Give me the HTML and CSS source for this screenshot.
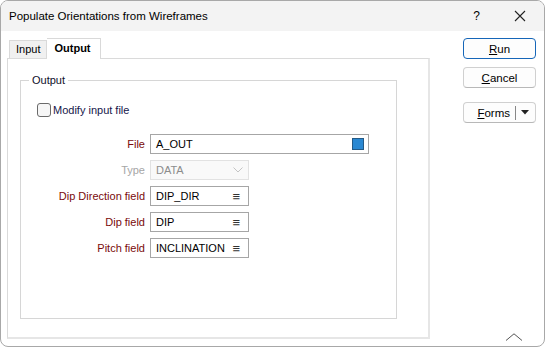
FILE: index.html
```html
<!DOCTYPE html>
<html lang="en">
<head>
<meta charset="UTF-8">
<title>Populate Orientations from Wireframes</title>
<link rel="stylesheet" href="styles.css">
</head>
<body>
  <div class="window">
    <div class="titlebar">
      <span class="title">Populate Orientations from Wireframes</span>
      <span class="help">?</span>
      <svg class="close" width="12" height="12" viewBox="0 0 12 12">
        <path d="M1 1 L11 11 M11 1 L1 11" stroke="#222" stroke-width="1.1" fill="none"/>
      </svg>
    </div>

    <div class="main">
      <div class="left">
        <div class="tabs">
          <div class="tab">Input</div>
          <div class="tab active">Output</div>
        </div>
        <div class="panel">
          <fieldset class="group">
            <legend>Output</legend>

            <label class="check">
              <span class="box"></span>
              <span>Modify input file</span>
            </label>

            <div class="form">
              <span class="label">File</span>
              <div class="field wide">
                <span>A_OUT</span>
                <span class="swatch"></span>
              </div>

              <span class="label disabled">Type</span>
              <div class="field combo disabled">
                <span>DATA</span>
                <svg width="10" height="6" viewBox="0 0 10 6"><path d="M0.5 0.5 L5 5 L9.5 0.5" stroke="#c4c4c4" fill="none"/></svg>
              </div>

              <span class="label">Dip Direction field</span>
              <div class="field">
                <span>DIP_DIR</span>
                <span class="list">&#8801;</span>
              </div>

              <span class="label">Dip field</span>
              <div class="field">
                <span>DIP</span>
                <span class="list">&#8801;</span>
              </div>

              <span class="label">Pitch field</span>
              <div class="field">
                <span>INCLINATION</span>
                <span class="list">&#8801;</span>
              </div>
            </div>
          </fieldset>
        </div>
      </div>

      <div class="side">
        <button class="btn default"><u>R</u>un</button>
        <button class="btn"><u>C</u>ancel</button>
        <button class="btn forms">
          <span class="forms-text"><u>F</u>orms</span>
          <span class="sep"></span>
          <svg width="8" height="5" viewBox="0 0 8 5"><path d="M0 0 L8 0 L4 4.5 Z" fill="#222"/></svg>
        </button>
      </div>
    </div>

    <svg class="grip" width="18" height="8" viewBox="0 0 18 8">
      <path d="M1 7.5 L9 0.8 L17 7.5" stroke="#555" stroke-width="1" fill="none"/>
    </svg>
  </div>
</body>
</html>
```

FILE: styles.css
```css
* {
  box-sizing: border-box;
}

body {
  margin: 0;
  font-family: "Liberation Sans", Arial, sans-serif;
  font-size: 11px;
  color: #000;
  background: #fff;
}

.window {
  position: relative;
  width: 545px;
  height: 347px;
  border: 1px solid #a8a8a8;
  border-radius: 8px;
  overflow: hidden;
  background: #fff;
}

.titlebar {
  display: flex;
  align-items: center;
  height: 30px;
  background: #f3f3f3;
  padding-left: 8px;
}
.title {
  flex: 1;
  font-size: 11.5px;
}
.help {
  font-size: 12px;
  margin-right: 34px;
}
.close {
  margin-right: 18px;
}

.main {
  display: flex;
}

.left {
  width: 429px;
  padding: 7px 0 0 6px;
}

.tabs {
  display: flex;
  align-items: flex-end;
  height: 20px;
  padding-left: 2px;
}
.tab {
  height: 18px;
  line-height: 17px;
  padding: 0 6px;
  border: 1px solid #d9d9d9;
  border-bottom: none;
  background: #f0f0f0;
}
.tab.active {
  height: 21px;
  line-height: 19px;
  margin-bottom: -1px;
  padding: 0 9px 0 7px;
  font-weight: bold;
  background: #fff;
  position: relative;
  z-index: 1;
  border-left: none;
}

.panel {
  height: 281px;
  border: 1px solid #dadada;
  border-right: 2px solid #e6e6e6;
  border-bottom: 2px solid #e6e6e6;
  padding: 15px 0 0 12px;
}

.group {
  margin: 0;
  width: 377px;
  height: 245px;
  border: 1px solid #d6d6d6;
  padding: 0;
}
.group legend {
  margin-left: 8px;
  padding: 0 3px;
  line-height: 12px;
  color: #0f0f2a;
}

.check {
  display: flex;
  align-items: center;
  gap: 2px;
  height: 14px;
  margin: 17px 0 0 16px;
  color: #16164a;
}
.box {
  width: 14px;
  height: 14px;
  border: 1px solid #6a6a6a;
  border-radius: 3px;
  background: #f6f6f6;
}

.form {
  display: grid;
  grid-template-columns: 124px auto;
  column-gap: 5px;
  row-gap: 6px;
  margin-top: 17px;
  align-items: center;
}
.label {
  text-align: right;
  color: #7a0a0a;
}
.label.disabled {
  color: #a6a6a6;
}

.field {
  display: flex;
  align-items: center;
  justify-content: space-between;
  width: 99px;
  height: 20px;
  padding: 0 8px 0 5px;
  border: 1px solid #a6a6a6;
  background: #fff;
}
.field.wide {
  width: 219px;
  padding-right: 4px;
}
.field.combo {
  border-color: #e2e2e2;
  background: #f9f9f9;
  color: #8c8c8c;
  padding-right: 5px;
}
.swatch {
  width: 12px;
  height: 12px;
  background: #2a88d2;
  border: 1px solid #245a86;
}
.list {
  font-size: 13px;
  color: #333;
}

.side {
  display: flex;
  flex-direction: column;
  gap: 8px;
  padding: 7px 0 0 33px;
}
.btn {
  width: 73px;
  height: 21px;
  font-family: inherit;
  font-size: 11.5px;
  color: #000;
  border: 1px solid #d0d0d0;
  border-bottom-color: #b8b8b8;
  border-radius: 4px;
  background: #fdfdfd;
  padding: 0;
}
.btn.default {
  border: 1px solid #1666b8;
}
.btn.forms {
  margin-top: 6px;
  display: flex;
  align-items: center;
  justify-content: flex-end;
  gap: 5px;
  padding-right: 6px;
}
.sep {
  width: 1px;
  height: 14px;
  background: #888;
}

.grip {
  position: absolute;
  right: 21px;
  bottom: 5px;
}
```
